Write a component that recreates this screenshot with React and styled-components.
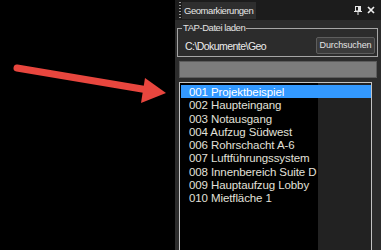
import styled, { createGlobalStyle } from 'styled-components';

const GlobalStyle = createGlobalStyle`
  html, body {
    margin: 0;
    padding: 0;
    background: #000;
  }
  body {
    font-family: "Liberation Sans", Arial, sans-serif;
  }
`;

const Page = styled.div`
  display: flex;
  width: 381px;
  height: 250px;
  overflow: hidden;
  background: #000;
`;

const ArrowArea = styled.div`
  flex: 0 0 175px;
  height: 250px;
`;

const Panel = styled.div`
  flex: 1;
  display: flex;
  flex-direction: column;
  background: #2c2c2c;
  min-width: 0;
`;

const TitleBar = styled.div`
  display: flex;
  align-items: center;
  height: 20px;
  background: #1c1c1c;
  padding-left: 4px;
  padding-right: 5px;
`;

const Grip = styled.div`
  width: 2px;
  height: 16px;
  margin-right: 1px;
  background: repeating-linear-gradient(to bottom, #9a9a9a 0 1px, transparent 1px 3px);
`;

const Tab = styled.div`
  height: 17px;
  line-height: 17px;
  padding: 0 3px 0 2px;
  background: #2e2e2e;
  color: #e6e6e6;
  font-size: 9.5px;
  letter-spacing: -0.45px;
`;

const Spacer = styled.div`
  flex: 1;
`;

const TitleButton = styled.div`
  display: flex;
  align-items: center;
  justify-content: center;
  width: 11px;
  height: 12px;
  margin-left: ${(p) => p.$gap || 0}px;
`;

const Content = styled.div`
  display: flex;
  flex-direction: column;
  padding: 2px 3px 0 2px;
  flex: 1;
  min-height: 0;
`;

const GroupBox = styled.fieldset`
  margin: 0;
  padding: 3px 2px 2px 4px;
  border: 1px solid #a6a6a6;
  min-width: 0;
`;

const Legend = styled.legend`
  padding: 0 1px;
  margin: 0;
  font-size: 9.5px;
  line-height: 12px;
  letter-spacing: -0.45px;
  color: #e2e2e2;
`;

const PathRow = styled.div`
  display: flex;
  align-items: center;
  justify-content: space-between;
`;

const PathText = styled.span`
  padding-left: 3px;
  font-size: 10.5px;
  letter-spacing: -0.55px;
  color: #ececec;
`;

const Button = styled.div`
  box-sizing: border-box;
  width: 59px;
  height: 17px;
  line-height: 15px;
  text-align: center;
  border: 1px solid #5e5e5e;
  border-radius: 2px;
  background: #3b3b3b;
  color: #e4e4e4;
  font-size: 9px;
  letter-spacing: -0.1px;
`;

const GrayBar = styled.div`
  height: 17px;
  margin: 4px 1px 0 2px;
  background: #7c7c7c;
  border: 1px solid #5c5c5c;
  box-sizing: border-box;
`;

const List = styled.div`
  flex: 1;
  margin: 4px 6px 0 2px;
  padding: 2px 0 0 1px;
  border: 1px solid #c4c4c4;
  border-bottom: none;
  background: linear-gradient(to right, #000 138px, #222 138px);
`;

const Row = styled.div`
  box-sizing: border-box;
  height: 13.25px;
  line-height: 13.25px;
  padding: 1px 0 0 8px;
  font-size: 11.5px;
  letter-spacing: -0.1px;
  white-space: nowrap;
  color: ${(p) => (p.$selected ? '#fff' : '#e2e0da')};
  background: ${(p) => (p.$selected ? '#3399ff' : 'transparent')};
`;

const items = [
  '001 Projektbeispiel',
  '002 Haupteingang',
  '003 Notausgang',
  '004 Aufzug Südwest',
  '006 Rohrschacht A-6',
  '007 Luftführungssystem',
  '008 Innenbereich Suite D',
  '009 Hauptaufzug Lobby',
  '010 Mietfläche 1',
];

function Arrow() {
  return (
    <svg width="175" height="250" viewBox="0 0 175 250">
      <line x1="17" y1="68" x2="148" y2="90" stroke="#e8463e" strokeWidth="7" strokeLinecap="round" />
      <polygon points="145,78 166,93 141,103" fill="#e8463e" />
    </svg>
  );
}

function PinIcon() {
  return (
    <svg width="8" height="9" viewBox="0 0 8 9">
      <rect x="1.5" y="0.5" width="5" height="4.5" fill="none" stroke="#e6e6e6" strokeWidth="1" />
      <rect x="4" y="1" width="2" height="4" fill="#e6e6e6" />
      <line x1="0" y1="5.5" x2="8" y2="5.5" stroke="#e6e6e6" strokeWidth="1" />
      <line x1="4" y1="6" x2="4" y2="9" stroke="#e6e6e6" strokeWidth="1" />
    </svg>
  );
}

function CloseIcon() {
  return (
    <svg width="8" height="8" viewBox="0 0 8 8">
      <path d="M1 1 L7 7 M7 1 L1 7" stroke="#ececec" strokeWidth="1.7" />
    </svg>
  );
}

export default function App() {
  return (
    <>
      <GlobalStyle />
      <Page>
        <ArrowArea>
          <Arrow />
        </ArrowArea>
        <Panel>
          <TitleBar>
            <Grip />
            <Tab>Geomarkierungen</Tab>
            <Spacer />
            <TitleButton>
              <PinIcon />
            </TitleButton>
            <TitleButton $gap={2}>
              <CloseIcon />
            </TitleButton>
          </TitleBar>
          <Content>
            <GroupBox>
              <Legend>TAP-Datei laden</Legend>
              <PathRow>
                <PathText>C:\Dokumente\Geo</PathText>
                <Button>Durchsuchen</Button>
              </PathRow>
            </GroupBox>
            <GrayBar />
            <List>
              {items.map((name, i) => (
                <Row key={name} $selected={i === 0}>
                  {name}
                </Row>
              ))}
            </List>
          </Content>
        </Panel>
      </Page>
    </>
  );
}
